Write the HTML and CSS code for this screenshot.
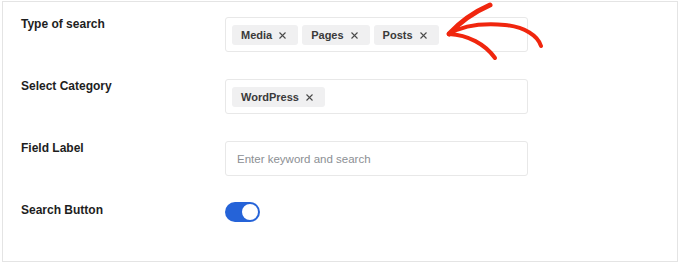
FILE: index.html
```html
<!DOCTYPE html>
<html lang="en">
<head>
    <meta charset="UTF-8">
    <meta name="viewport" content="width=device-width, initial-scale=1.0">
    <title>Search Settings</title>
    <link rel="stylesheet" href="styles.css">
</head>
<body>
    <div class="panel">
        <!-- Type of search -->
        <div class="row">
            <div class="label">Type of search</div>
            <div class="field chips">
                <span class="chip">Media <svg class="x" viewBox="0 0 7 7"><path d="M0.5 0.5L6.5 6.5M6.5 0.5L0.5 6.5"/></svg></span>
                <span class="chip">Pages <svg class="x" viewBox="0 0 7 7"><path d="M0.5 0.5L6.5 6.5M6.5 0.5L0.5 6.5"/></svg></span>
                <span class="chip">Posts <svg class="x" viewBox="0 0 7 7"><path d="M0.5 0.5L6.5 6.5M6.5 0.5L0.5 6.5"/></svg></span>
            </div>
        </div>

        <!-- Select Category -->
        <div class="row">
            <div class="label">Select Category</div>
            <div class="field chips">
                <span class="chip">WordPress <svg class="x" viewBox="0 0 7 7"><path d="M0.5 0.5L6.5 6.5M6.5 0.5L0.5 6.5"/></svg></span>
            </div>
        </div>

        <!-- Field Label -->
        <div class="row">
            <div class="label">Field Label</div>
            <input class="field text-input" type="text" placeholder="Enter keyword and search">
        </div>

        <!-- Search Button -->
        <div class="row">
            <div class="label">Search Button</div>
            <span class="toggle"></span>
        </div>
    </div>

    <!-- hand drawn arrow pointing at the chips -->
    <svg class="arrow" viewBox="0 0 680 70" width="680" height="70">
        <path d="M449 34 C462 26 482 23 505 25 C525 27 538 36 541 46" stroke-width="4"/>
        <path d="M449 34 C460 22 474 12 490 5" stroke-width="5"/>
        <path d="M449 34 C468 35 485 44 495 58" stroke-width="4"/>
    </svg>
</body>
</html>
```

FILE: styles.css
```css
/* General Styling */
body {
    font-family: "Liberation Sans", Arial, sans-serif;
    margin: 0;
    padding: 0;
    background-color: #fff;
    position: relative;
}
.panel {
    margin: 1px 0 0 2px;
    width: 676px;
    height: 261px;
    box-sizing: border-box;
    border: 1px solid #e4e4e4;
    padding: 15px 0 0 18px;
    display: flex;
    flex-direction: column;
    gap: 27px;
}
.row {
    display: flex;
    align-items: flex-start;
}
.label {
    width: 204px;
    flex-shrink: 0;
    font-size: 12px;
    font-weight: bold;
    line-height: 14px;
    color: #1e1e1e;
}
.field {
    width: 303px;
    height: 35px;
    box-sizing: border-box;
    border: 1px solid #e8e8e8;
    border-radius: 3px;
    background: #fff;
}
.chips {
    display: flex;
    gap: 4px;
    padding: 7px 6px 6px;
}
.chip {
    display: flex;
    align-items: center;
    gap: 7px;
    height: 20px;
    padding: 0 12px 0 9px;
    background: #f0f0f1;
    border-radius: 3px;
    font-size: 11px;
    font-weight: bold;
    color: #3a3a3a;
}
.chip .x {
    width: 7px;
    height: 7px;
    stroke: #4a4a4a;
    stroke-width: 1.1;
    fill: none;
}
.text-input {
    padding: 0 11px;
    font-family: inherit;
    font-size: 11.5px;
    color: #333;
    outline: none;
}
.text-input::placeholder {
    color: #8c8f94;
}
.toggle {
    position: relative;
    display: block;
    width: 35px;
    height: 20px;
    margin-top: -1px;
    border-radius: 10px;
    background: #2563d8;
}
.toggle::after {
    content: "";
    position: absolute;
    top: 2px;
    right: 2px;
    width: 16px;
    height: 16px;
    border-radius: 50%;
    background: #fff;
}
.arrow {
    position: absolute;
    top: 0;
    left: 0;
    fill: none;
    stroke: #f0260e;
    stroke-linecap: round;
    stroke-linejoin: round;
}
```
